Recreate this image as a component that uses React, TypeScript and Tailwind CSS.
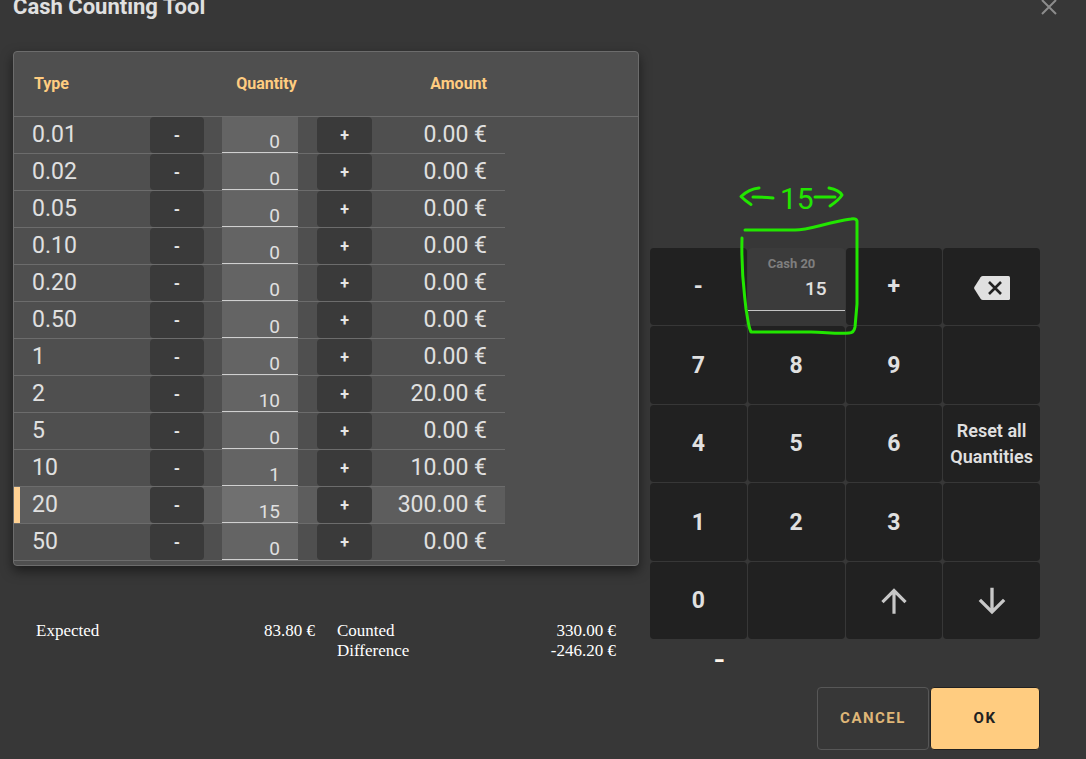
import { useState } from "react";
import { MdArrowDownward, MdArrowUpward } from "react-icons/md";

const types = [
  "0.01",
  "0.02",
  "0.05",
  "0.10",
  "0.20",
  "0.50",
  "1",
  "2",
  "5",
  "10",
  "20",
  "50",
];

const initialQuantities = [0, 0, 0, 0, 0, 0, 0, 10, 0, 1, 15, 0];

const expected = 83.8;

const keyClass =
  "flex items-center justify-center rounded bg-[#212121] pt-0.5 text-[23px] font-bold text-[#e0e0e0] hover:bg-[#2a2a2a]";

const stepClass =
  "block h-9 w-full rounded bg-[#3a3a3a] pt-0.5 text-base font-bold text-[#e6e6e6] hover:bg-[#444444]";

function euro(value: number) {
  return `${value.toFixed(2)} €`;
}

function BackspaceIcon() {
  return (
    <svg width="36" height="24" viewBox="0 0 36 24" aria-hidden="true">
      <path
        d="M9 0h25.500a1.500 1.500 0 0 1 1.500 1.500v21a1.500 1.500 0 0 1-1.500 1.500H9a3 3 0 0 1-2.400-1.300L0.400 13a2 2 0 0 1 0-2L6.600 1.300A3 3 0 0 1 9 0Z"
        fill="#e0e0e0"
      />
      <path d="M15 6l12 12M27 6L15 18" stroke="#212121" strokeWidth="2.600" />
    </svg>
  );
}

function Annotation() {
  return (
    <svg
      className="pointer-events-none absolute -top-17 left-[85px]"
      width="130"
      height="160"
      viewBox="735 180 130 160"
      fill="none"
      stroke="#22e600"
      strokeWidth="3"
      strokeLinecap="round"
      strokeLinejoin="round"
      aria-hidden="true"
    >
      <path d="M759 188q-10 1-18 8.500q4 4 10 8" />
      <path d="M753 197q9 0 20 1" />
      <path d="M815 197h20" />
      <path d="M829 188q10 2 13 7q-3 5-12 11" />
      <path d="M745 230h50c14 0 30-7 56-11q5-1 6 2v83l-2 23q-1 6-6 6c-14 1-24-1-38-1h-60c-3-6-3-13-5-23c-2-20-5-35-4-71" />
      <text
        x="780"
        y="209"
        fill="#22e600"
        stroke="none"
        className="font-['Roboto',sans-serif] text-[30px]"
      >
        15
      </text>
    </svg>
  );
}

export default function App() {
  const [quantities, setQuantities] = useState(initialQuantities);
  const [active, setActive] = useState(10);

  const setQuantity = (index: number, value: number) => {
    setQuantities((prev) =>
      prev.map((q, i) => (i === index ? Math.max(0, value || 0) : q)),
    );
  };

  const current = quantities[active];
  const counted = types.reduce((sum, t, i) => sum + Number(t) * quantities[i], 0);

  const digitKey = (digit: number) => (
    <button
      type="button"
      className={keyClass}
      onClick={() => setQuantity(active, current * 10 + digit)}
    >
      {digit}
    </button>
  );

  return (
    <div className="min-h-screen bg-[#373737] font-['Roboto',sans-serif] text-[#e0e0e0]">
      <header className="flex h-3.5 items-center justify-between pr-[29px] pl-[13px]">
        <h1 className="text-[22px] leading-none font-bold">Cash Counting Tool</h1>
        <button type="button" aria-label="Close" className="text-[#8c8c8c]">
          <svg width="16" height="16" viewBox="0 0 16 16" stroke="currentColor" strokeWidth="2">
            <path d="M1 1l14 14M15 1L1 15" />
          </svg>
        </button>
      </header>

      <main className="flex items-start gap-[11px] pt-[37px] pr-[46px] pl-[13px]">
        <div className="min-w-0 flex-1">
          <div className="rounded border border-[#6c6c6c] bg-[#4f4f4f] pb-1 shadow-[0_5px_12px_rgba(0,0,0,0.5)]">
            <table className="w-full table-fixed border-separate border-spacing-0">
              <colgroup>
                <col className="w-[136px]" />
                <col className="w-[54px]" />
                <col className="w-[113px]" />
                <col className="w-[55px]" />
                <col className="w-[133px]" />
                <col />
              </colgroup>
              <thead>
                <tr className="h-[65px] text-base font-bold text-[#ffcc80] [&>th]:border-b [&>th]:border-[#6c6c6c]">
                  <th className="pl-5 text-left">Type</th>
                  <th />
                  <th className="pl-3 text-center">Quantity</th>
                  <th />
                  <th className="pr-[18px] text-right">Amount</th>
                  <th />
                </tr>
              </thead>
              <tbody>
                {types.map((type, i) => (
                  <tr
                    key={type}
                    onClick={() => setActive(i)}
                    className={`h-[37px] text-[23px] leading-8 [&>td]:border-b [&>td]:border-[#6c6c6c] ${
                      i === active ? "[&>td]:bg-[#5d5d5d]" : ""
                    }`}
                  >
                    <td className="relative p-0 pl-[18px]">
                      {i === active && (
                        <span className="absolute inset-y-0 left-0 w-1.5 bg-[#ffd193]" />
                      )}
                      {type}
                    </td>
                    <td className="p-0">
                      <button
                        type="button"
                        aria-label={`Decrease ${type}`}
                        className={stepClass}
                        onClick={() => setQuantity(i, quantities[i] - 1)}
                      >
                        -
                      </button>
                    </td>
                    <td className="py-0 pr-[19px] pl-[18px]">
                      <input
                        type="text"
                        inputMode="numeric"
                        aria-label={`Quantity ${type}`}
                        value={quantities[i]}
                        onChange={(e) => setQuantity(i, Number(e.target.value))}
                        className="block h-9 w-full border-b border-[#d0d0d0] bg-white/12 pt-3.5 pr-[18px] text-right text-[19px] leading-5 outline-none"
                      />
                    </td>
                    <td className="p-0">
                      <button
                        type="button"
                        aria-label={`Increase ${type}`}
                        className={stepClass}
                        onClick={() => setQuantity(i, quantities[i] + 1)}
                      >
                        +
                      </button>
                    </td>
                    <td className="p-0 pr-[18px] text-right whitespace-nowrap">
                      {euro(Number(type) * quantities[i])}
                    </td>
                  </tr>
                ))}
              </tbody>
            </table>
          </div>

          <dl className="mt-[55px] grid grid-cols-2 gap-x-[22px] px-[23px] font-['Liberation_Serif',serif] text-[17px] leading-5 text-white">
            <div className="flex justify-between">
              <dt>Expected</dt>
              <dd>{euro(expected)}</dd>
            </div>
            <div className="flex justify-between">
              <dt>Counted</dt>
              <dd>{euro(counted)}</dd>
            </div>
            <div className="col-start-2 flex justify-between">
              <dt>Difference</dt>
              <dd>{euro(expected - counted)}</dd>
            </div>
          </dl>
        </div>

        <div className="mt-[197px] w-[390px] shrink-0">
          <div className="relative grid h-[391px] grid-cols-4 grid-rows-5 gap-px">
            <button
              type="button"
              className={keyClass}
              onClick={() => setQuantity(active, current - 1)}
            >
              -
            </button>
            <div>
              <div className="h-[63px] rounded-t border-b border-[#c4c4c4] bg-[#3b3b3b] pt-2 pr-[18px] pl-5">
                <label
                  htmlFor="cash-input"
                  className="block text-[13px] leading-4 font-bold text-[#7f7f7f]"
                >
                  Cash {types[active]}
                </label>
                <input
                  id="cash-input"
                  type="text"
                  inputMode="numeric"
                  value={current}
                  onChange={(e) => setQuantity(active, Number(e.target.value))}
                  className="mt-[5px] block w-full bg-transparent text-right text-[19px] leading-6 font-medium outline-none"
                />
              </div>
            </div>
            <button
              type="button"
              className={keyClass}
              onClick={() => setQuantity(active, current + 1)}
            >
              +
            </button>
            <button
              type="button"
              aria-label="Backspace"
              className={keyClass}
              onClick={() => setQuantity(active, Math.floor(current / 10))}
            >
              <BackspaceIcon />
            </button>

            {digitKey(7)}
            {digitKey(8)}
            {digitKey(9)}
            <div className={keyClass} />

            {digitKey(4)}
            {digitKey(5)}
            {digitKey(6)}
            <button
              type="button"
              className="rounded bg-[#212121] pt-0.5 text-lg leading-[26px] font-semibold hover:bg-[#2a2a2a]"
              onClick={() => setQuantities(types.map(() => 0))}
            >
              Reset all Quantities
            </button>

            {digitKey(1)}
            {digitKey(2)}
            {digitKey(3)}
            <div className={keyClass} />

            {digitKey(0)}
            <div className={keyClass} />
            <button
              type="button"
              aria-label="Previous type"
              className={keyClass}
              onClick={() => setActive(Math.max(0, active - 1))}
            >
              <MdArrowUpward size={38} color="#c8c8c8" />
            </button>
            <button
              type="button"
              aria-label="Next type"
              className={keyClass}
              onClick={() => setActive(Math.min(types.length - 1, active + 1))}
            >
              <MdArrowDownward size={40} color="#c8c8c8" />
            </button>

            <Annotation />
          </div>

          <p className="mt-0.5 pl-16 font-['Liberation_Serif',serif] text-[32px] leading-8 font-bold text-[#fff5ea]">
            -
          </p>

          <div className="mt-3.5 flex justify-end gap-px text-[15px] font-bold">
            <button
              type="button"
              className="h-[63px] w-28 rounded border border-[#575757] tracking-widest text-[#dfb677]"
            >
              CANCEL
            </button>
            <button
              type="button"
              className="h-[63px] w-[110px] rounded border border-[#212121] bg-[#ffcc80] tracking-widest text-[#212121]"
            >
              OK
            </button>
          </div>
        </div>
      </main>
    </div>
  );
}
